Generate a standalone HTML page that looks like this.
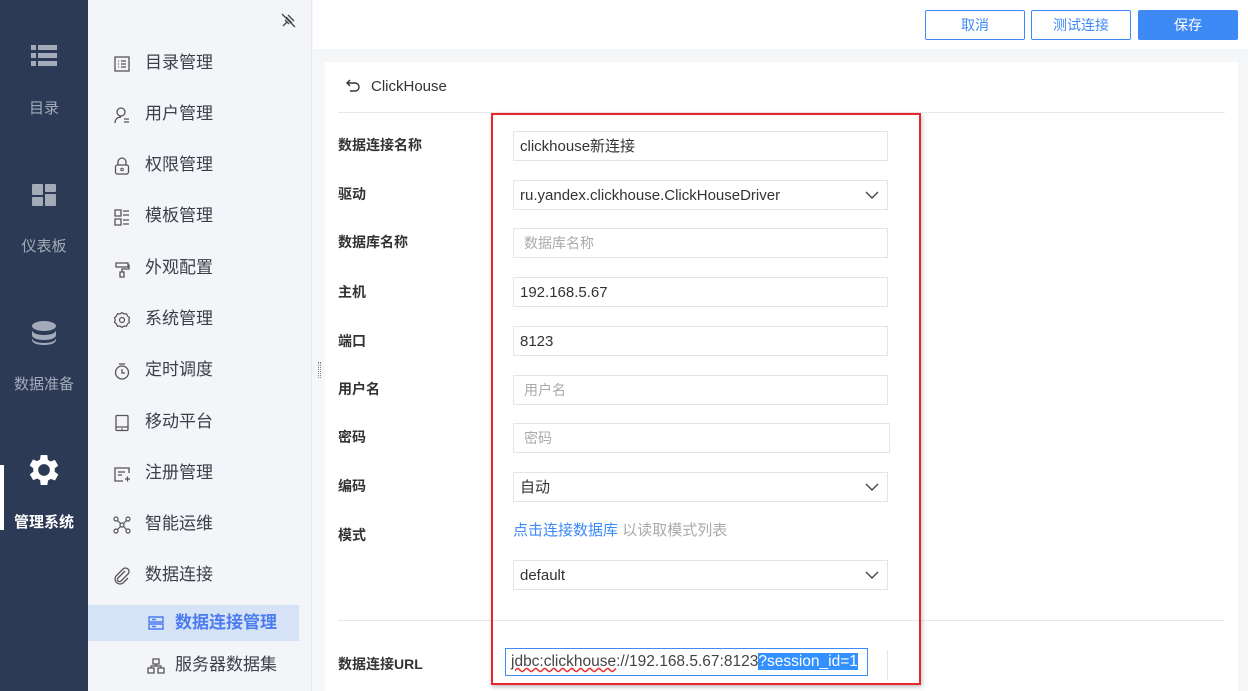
<!DOCTYPE html>
<html><head><meta charset="utf-8"><style>
*{margin:0;padding:0;box-sizing:border-box}
body{width:1248px;height:691px;overflow:hidden;position:relative;font-family:"Liberation Sans","Noto Sans CJK SC",sans-serif;background:#f5f6f8;color:#333}
.a{position:absolute}
.nav{left:0;top:0;width:88px;height:691px;background:#2c3a55}
.nl{width:88px;text-align:center;font-size:15px;color:#a3abb9}
.side{left:88px;top:0;width:224px;height:691px;background:#f3f5f9;border-right:1px solid #e6e8ec}
.si{left:145px;font-size:17px;color:#3a3f4a;line-height:20px}
.ic{left:113px;width:18px;height:18px}
.lab{left:338px;font-size:14px;font-weight:bold;color:#333;line-height:20px}
.inp{left:513px;width:375px;height:30px;border:1px solid #e3e5ea;background:#fff;font-size:15px;line-height:30px;padding-left:6px;color:#333}
.ph{color:#aaa;padding-left:10px;font-size:14px;line-height:28px}
.chev{position:absolute;right:8px;top:9px}
.btn{top:10px;width:100px;height:30px;border:1px solid #3d8af7;border-radius:2px;font-size:14px;text-align:center;line-height:28px;color:#3d8af7;background:#fff}
</style></head><body>
<div class="a nav">
  <svg class="a" style="left:31px;top:45px" width="26" height="22"><g fill="#a3abb9"><rect x="0" y="0" width="5" height="5"/><rect x="7" y="0" width="19" height="5"/><rect x="0" y="8" width="5" height="5"/><rect x="7" y="8" width="19" height="5"/><rect x="0" y="16" width="5" height="5"/><rect x="7" y="16" width="19" height="5"/></g></svg>
  <div class="a nl" style="top:97px">目录</div>
  <svg class="a" style="left:32px;top:184px" width="24" height="22"><g fill="#a3abb9"><rect x="0" y="0" width="11" height="11" rx="1"/><rect x="13" y="0" width="11" height="8" rx="1"/><rect x="0" y="13" width="11" height="9" rx="1"/><rect x="13" y="10" width="11" height="12" rx="1"/></g></svg>
  <div class="a nl" style="top:235px">仪表板</div>
  <svg class="a" style="left:32px;top:321px" width="24" height="24"><g fill="#a3abb9"><ellipse cx="12" cy="5" rx="12" ry="5"/><path d="M0 9c0 3 5 5 12 5s12-2 12-5v5c0 3-5 5-12 5S0 17 0 14z"/><path d="M0 17c0 3 5 5 12 5s12-2 12-5v2c0 3-5 5-12 5S0 22 0 19z"/></g></svg>
  <div class="a nl" style="top:373px">数据准备</div>
  <div class="a" style="left:0;top:465px;width:4px;height:65px;background:#fff"></div>
  <svg class="a" style="left:29px;top:455px" width="30" height="30" viewBox="3 3 18 18"><path fill="#fff" fill-rule="evenodd" d="M19.4 13a7.5 7.5 0 0 0 0-2l2.1-1.6-2-3.5-2.5 1a7.6 7.6 0 0 0-1.7-1L15 3h-4l-.4 2.7a7.6 7.6 0 0 0-1.7 1l-2.5-1-2 3.5L6.6 11a7.5 7.5 0 0 0 0 2l-2.1 1.6 2 3.5 2.5-1a7.6 7.6 0 0 0 1.7 1L11 21h4l.4-2.7a7.6 7.6 0 0 0 1.7-1l2.5 1 2-3.5zM13 15.5a3.5 3.5 0 1 1 0-7 3.5 3.5 0 0 1 0 7z" transform="translate(-1 0)"/></svg>
  <div class="a nl" style="top:511px;color:#fff;font-weight:bold">管理系统</div>
</div>
<div class="a side">
  <svg class="a" style="left:192px;top:12px" width="17" height="17" viewBox="0 0 17 17"><path d="M3 14l4-4M6 5l6 6M8 3l6 6M5 8l4 4M2 2l13 13" stroke="#444" stroke-width="1.3" fill="none"/></svg>
</div>
<div class="a" style="left:318px;top:362px;width:3px;height:16px;border-left:1px dotted #888;border-right:1px dotted #888"></div>
<svg class="a ic" style="top:55px" viewBox="0 0 18 18"><rect x="2" y="2" width="14" height="14" fill="none" stroke="#555" stroke-width="1.3"/><path d="M5 6h1M8 6h5M5 9h1M8 9h5M5 12h1M8 12h5" stroke="#555" stroke-width="1.2"/></svg>
<div class="a si" style="top:53px">目录管理</div>
<svg class="a ic" style="top:106px" viewBox="0 0 18 18"><circle cx="8" cy="6" r="4" fill="none" stroke="#555" stroke-width="1.3"/><path d="M2 17c0-4 3-6 6-6M11 13h5M11 16h5" stroke="#555" stroke-width="1.3" fill="none"/></svg>
<div class="a si" style="top:104px">用户管理</div>
<svg class="a ic" style="top:157px" viewBox="0 0 18 18"><path d="M5 8V5a4 4 0 0 1 8 0v3" fill="none" stroke="#555" stroke-width="1.3"/><rect x="2.5" y="8" width="13" height="9" rx="2" fill="none" stroke="#555" stroke-width="1.3"/><circle cx="9" cy="12.5" r="1.3" fill="none" stroke="#555"/></svg>
<div class="a si" style="top:155px">权限管理</div>
<svg class="a ic" style="top:208px" viewBox="0 0 18 18"><path d="M2 2h6v6H2zM2 11h6v6H2zM10 3h6M10 7h6M10 12h6M10 16h6" fill="none" stroke="#555" stroke-width="1.3"/></svg>
<div class="a si" style="top:206px">模板管理</div>
<svg class="a ic" style="top:260px" viewBox="0 0 18 18"><path d="M3 3h12v4H3zM15 5h1v4H9v3M7 12h4v5H7z" fill="none" stroke="#555" stroke-width="1.3"/></svg>
<div class="a si" style="top:258px">外观配置</div>
<svg class="a ic" style="top:311px" viewBox="0 0 18 18"><path d="M9 1.5l2 1.5 2.5-.2 1 2.3 2 1.5-.8 2.4.8 2.4-2 1.5-1 2.3-2.5-.2-2 1.5-2-1.5-2.5.2-1-2.3-2-1.5.8-2.4L1.5 6.6l2-1.5 1-2.3 2.5.2z" fill="none" stroke="#555" stroke-width="1.2"/><circle cx="9" cy="9" r="2.5" fill="none" stroke="#555" stroke-width="1.2"/></svg>
<div class="a si" style="top:309px">系统管理</div>
<svg class="a ic" style="top:362px" viewBox="0 0 18 18"><circle cx="9" cy="10.5" r="6.5" fill="none" stroke="#555" stroke-width="1.3"/><path d="M6 2h6M9 7v4h3" fill="none" stroke="#555" stroke-width="1.3"/></svg>
<div class="a si" style="top:360px">定时调度</div>
<svg class="a ic" style="top:414px" viewBox="0 0 18 18"><rect x="3" y="1.5" width="12" height="15" rx="1" fill="none" stroke="#555" stroke-width="1.3"/><path d="M3 13h12" stroke="#555" stroke-width="1.2"/><circle cx="9" cy="15" r=".8" fill="#555"/></svg>
<div class="a si" style="top:412px">移动平台</div>
<svg class="a ic" style="top:465px" viewBox="0 0 18 18"><path d="M16 8V3H2v13h8M5 7h7M5 10h4M12 14h5M14.5 11.5v5" fill="none" stroke="#555" stroke-width="1.3"/></svg>
<div class="a si" style="top:463px">注册管理</div>
<svg class="a ic" style="top:516px" viewBox="0 0 18 18"><g fill="none" stroke="#555" stroke-width="1.2"><circle cx="3" cy="3" r="2"/><circle cx="15" cy="3" r="2"/><circle cx="3" cy="15" r="2"/><circle cx="15" cy="15" r="2"/><circle cx="9" cy="9" r="2"/><path d="M4.5 4.5l3 3M13.5 4.5l-3 3M4.5 13.5l3-3M13.5 13.5l-3-3"/></g></svg>
<div class="a si" style="top:514px">智能运维</div>
<svg class="a ic" style="top:567px" viewBox="0 0 18 18"><path d="M12 4l-7 7a2 2 0 0 0 3 3l7-7a3.5 3.5 0 0 0-5-5L3 9a5 5 0 0 0 7 7l5-5" fill="none" stroke="#555" stroke-width="1.3"/></svg>
<div class="a si" style="top:565px">数据连接</div>
<div class="a" style="left:88px;top:605px;width:211px;height:36px;background:#d6e2f5"></div>
<svg class="a" style="left:147px;top:614px" width="18" height="18" viewBox="0 0 18 18"><path d="M2 3h14v5H2zM2 10h14v5H2zM5 5.5h4M5 12.5h4" fill="none" stroke="#4a7cf0" stroke-width="1.4"/></svg>
<div class="a si" style="left:175px;top:613px;color:#4a7cf0;font-weight:bold">数据连接管理</div>
<svg class="a" style="left:147px;top:657px" width="18" height="18" viewBox="0 0 18 18"><path d="M6 2h6v5H6zM1 11h6v5H1zM11 11h6v5h-6zM9 7v2M4 11V9h10v2" fill="none" stroke="#555" stroke-width="1.3"/></svg>
<div class="a si" style="left:175px;top:655px">服务器数据集</div>

<div class="a" style="left:313px;top:0;width:935px;height:49px;background:#fff"></div>
<div class="a btn" style="left:925px">取消</div>
<div class="a btn" style="left:1031px">测试连接</div>
<div class="a btn" style="left:1138px;background:#3d8af7;color:#fff">保存</div>
<div class="a" style="left:325px;top:62px;width:913px;height:629px;background:#fff"></div>
<svg class="a" style="left:346px;top:79px" width="16" height="14" viewBox="0 0 16 14"><path d="M4 1L1 4l3 3M1 4h8a4 4 0 0 1 0 8H4" fill="none" stroke="#333" stroke-width="1.4"/></svg>
<div class="a" style="left:371px;top:78px;font-size:15px;line-height:18px">ClickHouse</div>
<div class="a" style="left:338px;top:112px;width:887px;height:1px;background:#e6e8ec"></div>

<div class="a lab" style="top:135px">数据连接名称</div>
<div class="a inp" style="top:131px">clickhouse新连接</div>
<div class="a lab" style="top:184px">驱动</div>
<div class="a inp" style="top:180px">ru.yandex.clickhouse.ClickHouseDriver<svg class="chev" width="14" height="10"><path d="M1 2l6 6 6-6" fill="none" stroke="#444" stroke-width="1.4"/></svg></div>
<div class="a lab" style="top:232px">数据库名称</div>
<div class="a inp ph" style="top:228px">数据库名称</div>
<div class="a lab" style="top:282px">主机</div>
<div class="a inp" style="top:277px">192.168.5.67</div>
<div class="a lab" style="top:331px">端口</div>
<div class="a inp" style="top:326px">8123</div>
<div class="a lab" style="top:379px">用户名</div>
<div class="a inp ph" style="top:375px">用户名</div>
<div class="a lab" style="top:427px">密码</div>
<div class="a inp ph" style="top:423px;width:377px">密码</div>
<div class="a lab" style="top:476px">编码</div>
<div class="a inp" style="top:472px">自动<svg class="chev" width="14" height="10"><path d="M1 2l6 6 6-6" fill="none" stroke="#444" stroke-width="1.4"/></svg></div>
<div class="a lab" style="top:525px">模式</div>
<div class="a" style="left:513px;top:522px;font-size:15px;line-height:18px"><span style="color:#3d8af7">点击连接数据库</span> <span style="color:#aaa">以读取模式列表</span></div>
<div class="a inp" style="top:560px">default<svg class="chev" width="14" height="10"><path d="M1 2l6 6 6-6" fill="none" stroke="#444" stroke-width="1.4"/></svg></div>
<div class="a" style="left:338px;top:620px;width:887px;height:1px;background:#e6e8ec"></div>
<div class="a lab" style="top:654px">数据连接URL</div>
<div class="a" style="left:505px;top:648px;width:363px;height:28px;border:1px solid #3d8af7;background:#fff;font-size:15.5px;line-height:26px;padding-left:5px;color:#444;white-space:nowrap;overflow:hidden"><span style="text-decoration:underline wavy #e33">jdbc:clickhouse</span>://192.168.5.67:8123<span style="background:#3390ff;color:#fff">?session_id=1</span></div>
<div class="a" style="left:887px;top:650px;width:1px;height:30px;background:#e3e5ea"></div>
<div class="a" style="left:491px;top:113px;width:430px;height:572px;border:2px solid #e8262b;box-shadow:1px 2px 4px rgba(0,0,0,.25)"></div>
</body></html>
